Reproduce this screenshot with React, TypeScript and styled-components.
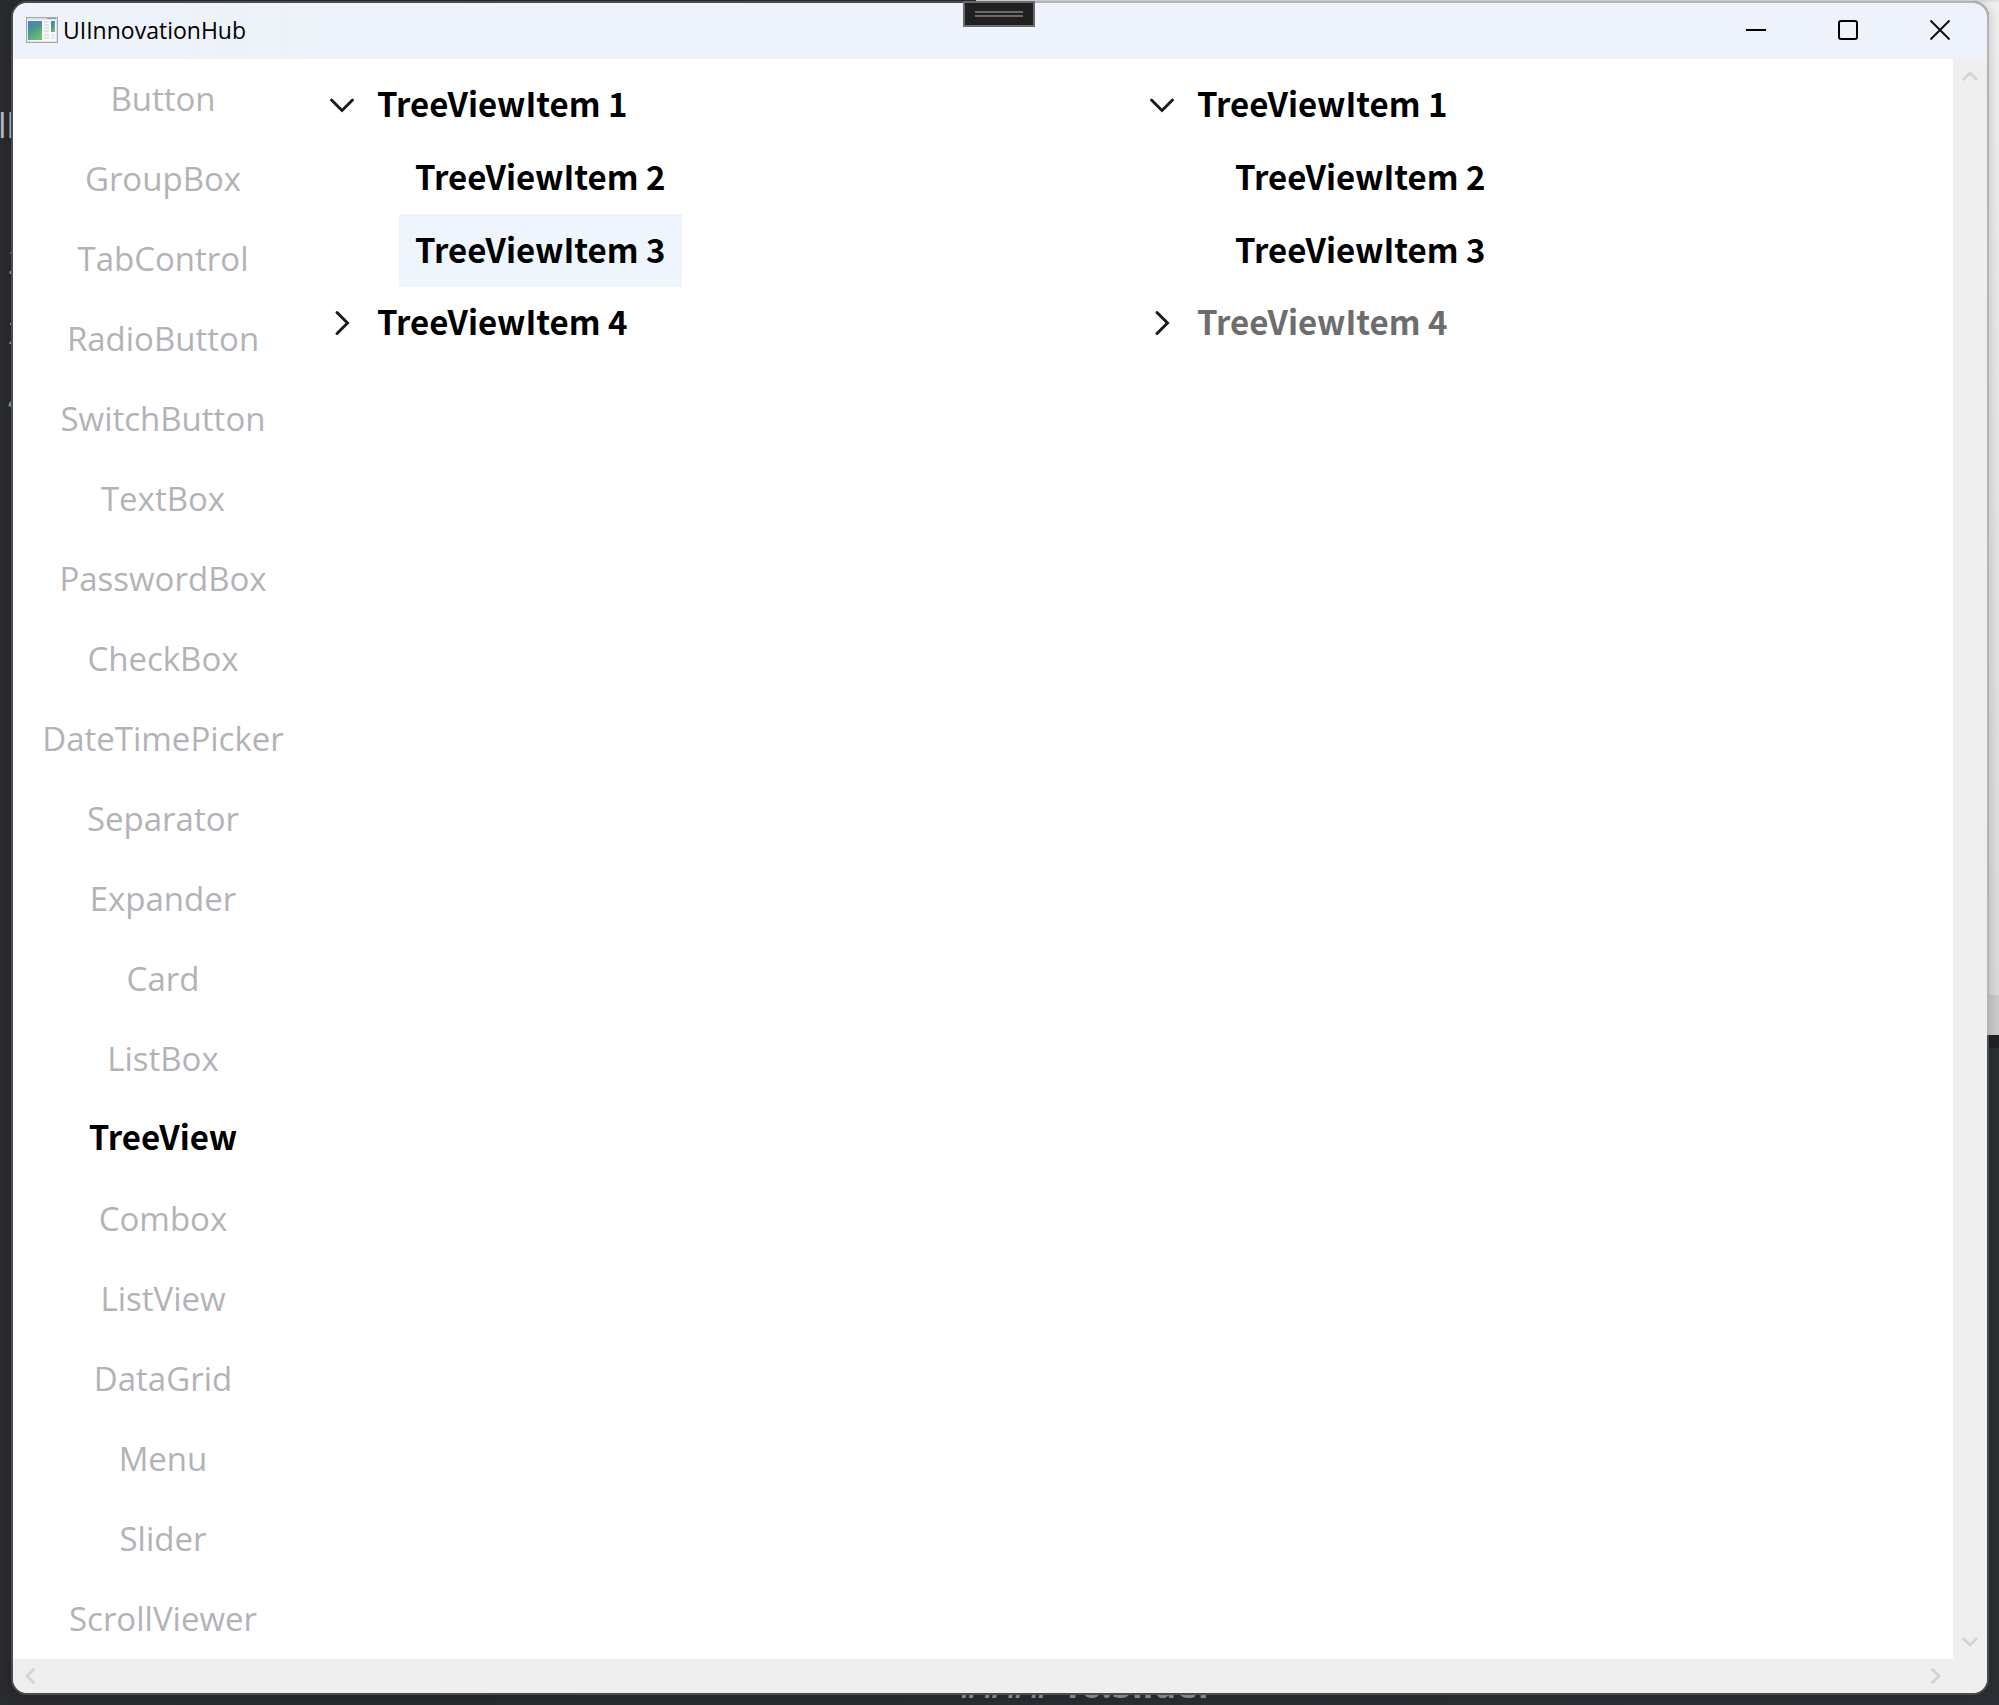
import React, { useState } from "react";
import styled, { createGlobalStyle } from "styled-components";

const GlobalStyle = createGlobalStyle`
  *, *::before, *::after { box-sizing: border-box; }
  body { margin: 0; background: #2a2b2e; font-family: "Open Sans", "Noto Sans", sans-serif; }
  button { font: inherit; color: inherit; background: none; border: 0; padding: 0; }
  ul { list-style: none; margin: 0; padding: 0; }
  a { color: inherit; text-decoration: none; }
`;

const boldFont = `"Noto Sans CJK SC", "Open Sans", sans-serif`;

const Desktop = styled.div`
  position: relative;
  display: flex;
  min-height: 100vh;
  padding: 1px 10px 10px 11px;
  overflow: hidden;
  background: linear-gradient(90deg, #2a2b2e, #26282a 494px, #262b2e 494px, #2c3035);
`;

const LightApp = styled.div`
  position: absolute;
  top: 0;
  left: 976px;
  right: 0;
  height: 1035px;
  background: linear-gradient(#dadcda 0, #f1f1f1 3px, #dcdcdc 995px, #cccccc 995px);
`;

const DarkBand = styled.div`
  position: absolute;
  top: 1035px;
  right: 0;
  width: 20px;
  height: 13px;
  background: #1f2326;
`;

const Behind = styled.span<{ $x: number; $y: number; $size: number; $weight?: number; $color?: string }>`
  position: absolute;
  left: ${(p) => p.$x}px;
  top: ${(p) => p.$y}px;
  color: ${(p) => p.$color ?? "#b8babd"};
  font-size: ${(p) => p.$size}px;
  font-weight: ${(p) => p.$weight ?? 400};
  line-height: 1;
  white-space: pre;
`;

const Window = styled.main`
  position: relative;
  flex: 1;
  display: flex;
  flex-direction: column;
  border: 2px solid #4b4c4d;
  border-radius: 16px;
  background: #fff;
  background-clip: padding-box;
  box-shadow: 0 0 14px rgba(0, 0, 0, 0.2);
`;

const LightEdge = styled.div`
  position: absolute;
  inset: -2px;
  border: 2px solid #b4b4b4;
  border-radius: 16px;
  clip-path: inset(0 0 660px 965px);
  pointer-events: none;
`;

const TitleBar = styled.header`
  display: flex;
  align-items: center;
  height: 56px;
  padding: 0 1px 2px 13px;
  border-radius: 14px 14px 0 0;
  background: linear-gradient(90deg, #eef2fa 160px, #ecf3f8 220px, #eef2fa 300px);
`;

const Title = styled.h1`
  flex: 1;
  margin: 0 0 0 5px;
  color: #000;
  font-size: 23px;
  font-weight: 400;
  line-height: 32px;
`;

const CaptionButton = styled.button`
  display: flex;
  align-items: center;
  justify-content: center;
  width: 92px;
  height: 54px;
`;

const DebugHandle = styled.button`
  position: absolute;
  top: -2px;
  left: 950px;
  display: flex;
  flex-direction: column;
  align-items: center;
  justify-content: center;
  gap: 2px;
  width: 72px;
  height: 26px;
  border: 2px solid #6a6a6a;
  background: #202020;
`;

const HandleLine = styled.span`
  width: 48px;
  height: 2px;
  background: #6a6a6a;
`;

const Body = styled.div`
  flex: 1;
  display: grid;
  grid-template-columns: 1fr 34px;
  grid-template-rows: 1fr 34px;
`;

const Client = styled.div`
  display: grid;
  grid-template-columns: 300px 1fr 1fr;
`;

const NavLink = styled.a<{ $active: boolean }>`
  display: flex;
  align-items: center;
  justify-content: center;
  height: 80px;
  padding-bottom: ${(p) => (p.$active ? 6 : 2)}px;
  color: ${(p) => (p.$active ? "#000" : "#b3b3b7")};
  font-family: ${(p) => (p.$active ? boldFont : "inherit")};
  font-size: 33px;
  font-weight: ${(p) => (p.$active ? 700 : 400)};
`;

const Tree = styled.ul`
  padding-top: 10px;
  color: #000;
  font-family: ${boldFont};
  font-size: 33px;
  font-weight: 700;
`;

const Row = styled.div<{ $parent?: boolean }>`
  display: flex;
  align-items: center;
  height: ${(p) => (p.$parent ? 72 : 73)}px;
`;

const Toggle = styled.button`
  display: flex;
  align-items: center;
  justify-content: center;
  width: 48px;
  height: 100%;
  padding-left: 10px;
`;

const ItemLabel = styled.button<{ $selected?: boolean }>`
  height: 100%;
  padding: 0 16px 4px;
  background: ${(p) => (p.$selected ? "#eef5fd" : "transparent")};
  white-space: nowrap;

  &:disabled { color: #6d6d6d; }
`;

const Children = styled.ul`
  padding-left: 86px;
`;

const Scrollbar = styled.div<{ $vertical?: boolean }>`
  display: flex;
  flex-direction: ${(p) => (p.$vertical ? "column" : "row")};
  justify-content: space-between;
  background: #efefef;
  border-radius: ${(p) => (p.$vertical ? "0" : "0 0 0 14px")};
`;

const ScrollArrow = styled.button`
  display: flex;
  align-items: center;
  justify-content: center;
  width: 34px;
  height: 34px;
`;

const Corner = styled.div`
  background: #efefef;
  border-radius: 0 0 14px 0;
`;

const AppIcon = () => (
  <svg width="32" height="26" viewBox="0 0 32 26" aria-hidden="true">
    <defs>
      <linearGradient id="pane" x1="0" y1="0" x2="0.6" y2="1">
        <stop offset="0" stopColor="#4a7fb0" />
        <stop offset="0.5" stopColor="#4a9a92" />
        <stop offset="1" stopColor="#6cbf6e" />
      </linearGradient>
    </defs>
    <rect width="32" height="26" fill="#a3a9ae" />
    <rect x="1" y="1" width="30" height="24" fill="#dfe2e5" />
    <rect x="2" y="3" width="28" height="21" fill="#f7f8fa" />
    <rect x="21" y="1" width="9" height="1" fill="#9aa1a8" />
    <rect x="2" y="4" width="14" height="19" fill="url(#pane)" />
    <path d="M2 14c4-4 9-5 14-5V4H2z" fill="#4f86b4" opacity="0.45" />
    <path d="M18 5h5M18 8h5M18 11h5M18 14h5M18 18h5M18 21h5" stroke="#c9ccd0" />
    <rect x="25" y="4" width="4" height="11" fill="url(#pane)" />
    <path d="M25 18h4M25 21h4" stroke="#d4d6d9" />
  </svg>
);

const Chevron = ({ open }: { open: boolean }) => (
  <svg width="26" height="26" viewBox="0 0 26 26" fill="none" stroke="#1b1b1b" strokeWidth="3" strokeLinecap="round" aria-hidden="true">
    <path d={open ? "M2.5 8L13 18.5L23.5 8" : "M8 2.5L18.5 13L8 23.5"} />
  </svg>
);

const arrows = {
  up: "M1 12L8 5L15 12",
  down: "M1 4L8 11L15 4",
  left: "M12 1L5 8L12 15",
  right: "M4 1L11 8L4 15",
};

const ArrowButton = ({ dir }: { dir: keyof typeof arrows }) => (
  <ScrollArrow type="button" aria-label={`Scroll ${dir}`}>
    <svg width="16" height="16" viewBox="0 0 16 16" fill="none" stroke="#d4d4d4" strokeWidth="3">
      <path d={arrows[dir]} />
    </svg>
  </ScrollArrow>
);

const pages = [
  "Button", "GroupBox", "TabControl", "RadioButton", "SwitchButton", "TextBox", "PasswordBox",
  "CheckBox", "DateTimePicker", "Separator", "Expander", "Card", "ListBox", "TreeView", "Combox",
  "ListView", "DataGrid", "Menu", "Slider", "ScrollViewer",
];

const TreeView = ({ initial, lastDisabled }: { initial?: string; lastDisabled?: boolean }) => {
  const [selected, setSelected] = useState(initial);
  const [open, setOpen] = useState(true);
  const item = (name: string, disabled = false) => (
    <ItemLabel type="button" disabled={disabled} $selected={selected === name} onClick={() => setSelected(name)}>
      {name}
    </ItemLabel>
  );
  return (
    <Tree>
      <li>
        <Row $parent>
          <Toggle type="button" aria-label="Toggle TreeViewItem 1" aria-expanded={open} onClick={() => setOpen(!open)}>
            <Chevron open={open} />
          </Toggle>
          {item("TreeViewItem 1")}
        </Row>
        {open && (
          <Children>
            <li><Row>{item("TreeViewItem 2")}</Row></li>
            <li><Row>{item("TreeViewItem 3")}</Row></li>
          </Children>
        )}
      </li>
      <li>
        <Row $parent>
          <Toggle type="button" aria-label="Expand TreeViewItem 4" aria-expanded={false}>
            <Chevron open={false} />
          </Toggle>
          {item("TreeViewItem 4", lastDisabled)}
        </Row>
      </li>
    </Tree>
  );
};

export default function App() {
  const [page, setPage] = useState("TreeView");
  return (
    <>
      <GlobalStyle />
      <Desktop>
        <LightApp />
        <DarkBand />
        <Behind $x={-2} $y={108} $size={34}>ll</Behind>
        <Behind $x={8} $y={246} $size={32} $color="#8fa0b0">2</Behind>
        <Behind $x={8} $y={317} $size={32} $color="#8fa0b0">3</Behind>
        <Behind $x={8} $y={384} $size={32} $color="#8fa0b0">4</Behind>
        <Behind $x={958} $y={1667} $size={36} $weight={700} $color="#8f9496">#### 16.Slider</Behind>
        <Window>
          <TitleBar>
            <AppIcon />
            <Title>UIInnovationHub</Title>
            <CaptionButton type="button" aria-label="Minimize">
              <svg width="20" height="20" viewBox="0 0 20 20" stroke="#000" strokeWidth="2"><path d="M0 10H20" /></svg>
            </CaptionButton>
            <CaptionButton type="button" aria-label="Maximize">
              <svg width="20" height="20" viewBox="0 0 20 20" fill="none" stroke="#000" strokeWidth="2"><rect x="1" y="1" width="18" height="18" rx="2" /></svg>
            </CaptionButton>
            <CaptionButton type="button" aria-label="Close">
              <svg width="20" height="20" viewBox="0 0 20 20" stroke="#111" strokeWidth="2"><path d="M0.5 0.5L19.5 19.5M19.5 0.5L0.5 19.5" /></svg>
            </CaptionButton>
          </TitleBar>
          <Body>
            <Client>
              <nav>
                <ul>
                  {pages.map((name) => (
                    <li key={name}>
                      <NavLink href={`#${name}`} $active={name === page} onClick={() => setPage(name)}>{name}</NavLink>
                    </li>
                  ))}
                </ul>
              </nav>
              <TreeView initial="TreeViewItem 3" />
              <TreeView lastDisabled />
            </Client>
            <Scrollbar $vertical>
              <ArrowButton dir="up" />
              <ArrowButton dir="down" />
            </Scrollbar>
            <Scrollbar>
              <ArrowButton dir="left" />
              <ArrowButton dir="right" />
            </Scrollbar>
            <Corner />
          </Body>
          <LightEdge />
          <DebugHandle type="button" aria-label="Debug toolbar">
            <HandleLine />
            <HandleLine />
          </DebugHandle>
        </Window>
      </Desktop>
    </>
  );
}
